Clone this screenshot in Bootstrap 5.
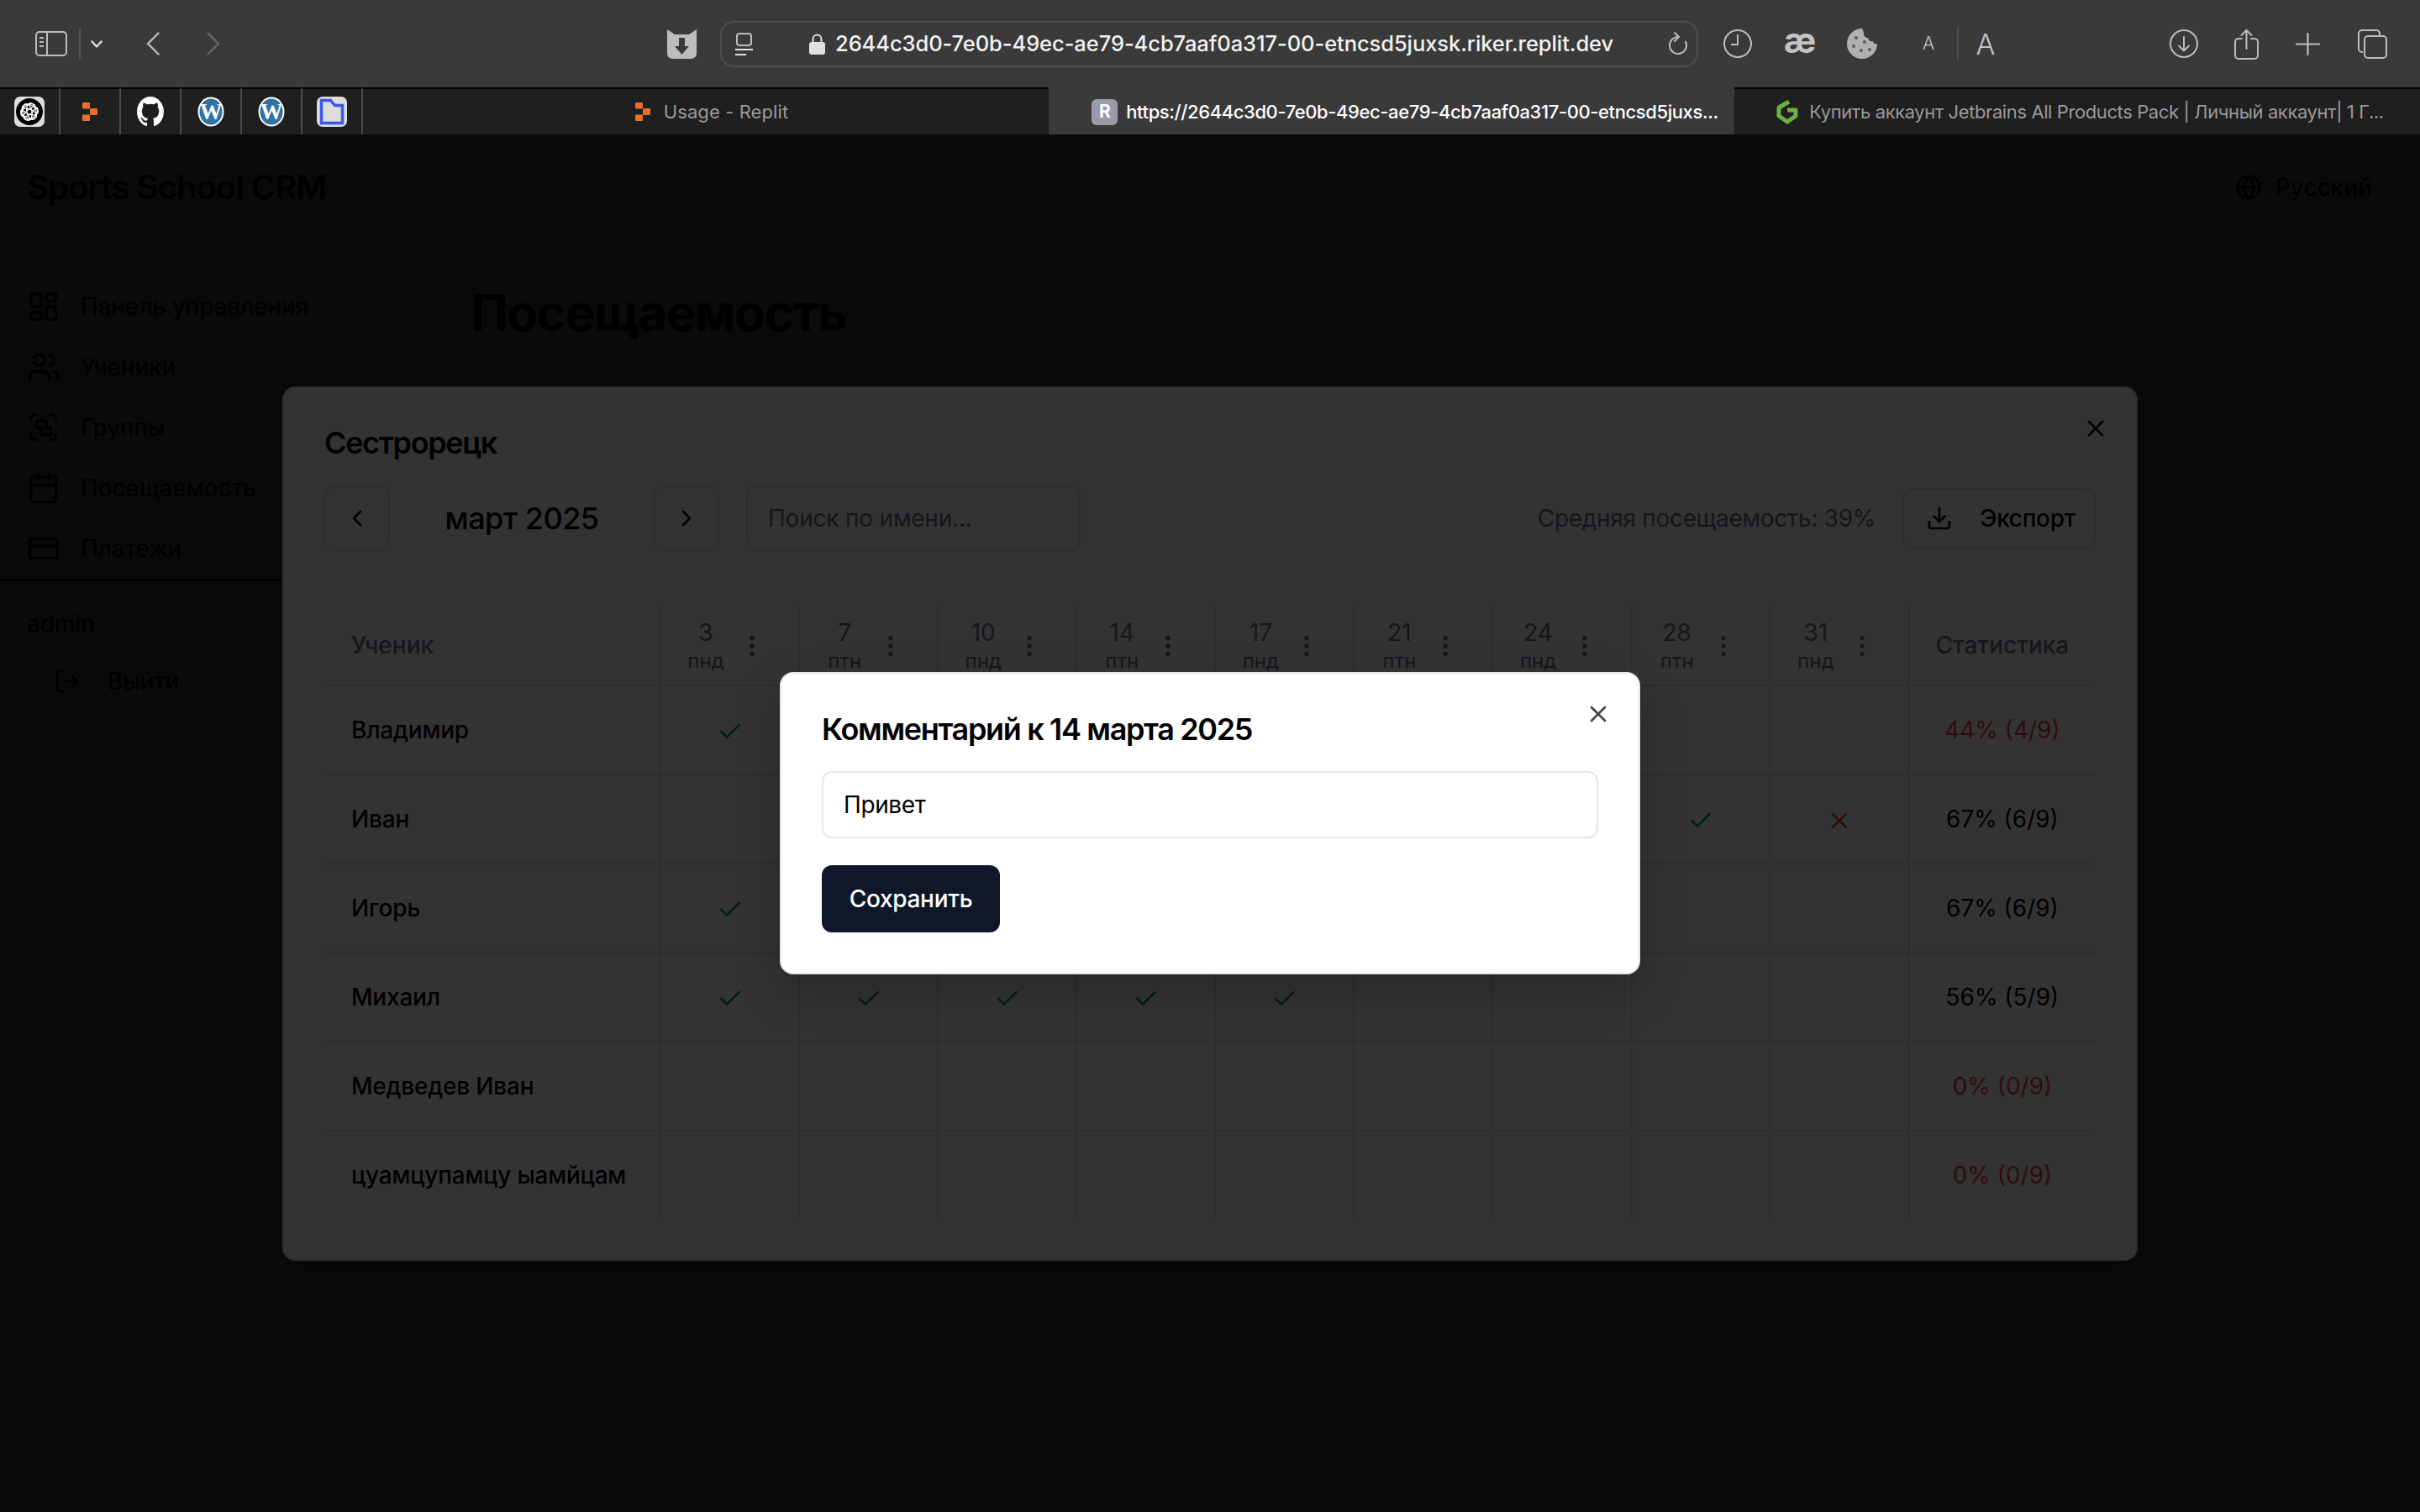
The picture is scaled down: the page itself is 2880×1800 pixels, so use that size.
<!DOCTYPE html>
<html lang="ru">
<head>
  <meta charset="utf-8">
  <title>Посещаемость</title>
  <link href="https://cdn.jsdelivr.net/npm/bootstrap@5.3.0/dist/css/bootstrap.min.css" rel="stylesheet">
  <style>
    body { width: 2880px; height: 1800px; overflow: hidden; background: #0a0a0a; font-family: Inter, "Noto Sans", sans-serif; color: #000; }
    svg.ln { fill: none; stroke: currentColor; stroke-width: 2; stroke-linecap: round; stroke-linejoin: round; flex: none; }

    /* browser chrome */
    .tool-bar { height: 104px; background: #3a3a3a; color: #bdbdbd; }
    .tool-bar svg { flex: none; }
    .tb-sep { width: 2px; height: 36px; background: #555; flex: none; }
    .m-side { margin-left: 42px; }
    .m-sep1 { margin-left: 14px; }
    .m-chev { margin-left: 12px; }
    .m-back { margin-left: 52px; }
    .m-fwd { margin-left: 56px; color: #666; }
    .m-shield { margin-left: 532px; }
    .url-box { margin-left: 28px; width: 1164px; height: 55px; border: 2px solid #4d4d4d; border-radius: 16px; padding-left: 15px; padding-right: 10px; }
    .url-text { color: #f2f2f2; font-size: 25.5px; font-weight: 500; letter-spacing: -.08px; margin-left: 12px; white-space: nowrap; }
    .m-lock { margin-left: 66px; }
    .m-clock { margin-left: 30px; }
    .ae-glyph { margin-left: 38px; width: 38px; font-size: 42px; font-weight: 700; line-height: 1; color: #c4c4c4; text-align: center; margin-top: -8px; }
    .m-cookie { margin-left: 36px; }
    .a-small { margin-left: 50px; width: 20px; font-size: 21px; font-weight: 300; color: #c4c4c4; text-align: center; }
    .m-sep2 { margin-left: 24px; height: 40px; background: #4d4d4d; }
    .a-large { margin-left: 18px; width: 28px; font-size: 34px; font-weight: 300; color: #c4c4c4; text-align: center; }
    .m-dl { margin-left: 205px; }
    .m-share { margin-left: 43px; }
    .m-plus { margin-left: 44px; }
    .m-tabs { margin-left: 45px; }

    .tab-strip { height: 56px; background: #1f1f1f; }
    .pin-cell { width: 72px; border-top: 2px solid #000; border-right: 2px solid #4a4a4a; }
    .tab-cell { flex: 0 0 816px; border-top: 2px solid #000; font-size: 22px; color: #9a9a9a; white-space: nowrap; gap: 16px; }
    .tab-usage { padding-left: 14px; letter-spacing: .1px; }
    .tab-shop { padding-left: 7px; letter-spacing: -.4px; gap: 13px; }
    .tab-cell.tab-on { background: #3a3a3a; border-top-color: #3a3a3a; color: #fff; font-weight: 500; gap: 10px; padding-left: 32px; letter-spacing: -.4px; }
    .tab-r { width: 31px; height: 31px; border-radius: 6px; background: #9a9aa8; color: #fff; font-size: 21px; font-weight: 700; }

    /* app under the dialogs */
    .app-root { height: 1640px; background: #fff; }
    .app-head { height: 128px; padding: 0 57px 0 32px; border-bottom: 2px solid #e5e7eb; }
    .app-brand { font-size: 40px; font-weight: 600; letter-spacing: -1px; }
    .lang-btn { font-size: 28px; font-weight: 500; gap: 16px; }
    .side-col { width: 512px; flex: none; font-size: 28px; }
    .side-nav { padding-top: 41px; border-bottom: 2px solid #000; }
    .side-item { height: 72px; padding-left: 32px; gap: 24px; }
    .side-user { padding: 34px 32px 0; height: 70px; line-height: 36px; }
    .side-out { height: 68px; margin-top: 16px; padding-left: 64px; gap: 32px; }
    .main-col { padding: 48px; }
    .page-title { font-size: 60px; font-weight: 700; line-height: 72px; letter-spacing: -1.4px; margin: 0; }

    .scrim { background: rgba(0, 0, 0, .8); }
    .dlg { border: 2px solid #e5e7eb; border-radius: 16px; padding: 48px; background: #fff; box-shadow: 0 20px 50px rgba(0, 0, 0, .22); }
    .dlg-wide { width: 2208px; padding-top: 47px; padding-bottom: 47px; }
    .dlg-small { width: 1024px; }
    .dlg-title { font-size: 36px; font-weight: 600; line-height: 36px; letter-spacing: -1.35px; margin: 0 0 32px; }
    .dlg-wide .dlg-title { margin-bottom: 33px; }
    .dlg-x { top: 32px; right: 32px; }
    .dlg-small .dlg-x { color: #444; }

    .tool-row { gap: 32px; }
    .nav-square { width: 78px; height: 78px; padding: 0; border: 2px solid #e5e7eb; border-radius: 12px; background: #fff; }
    .month-label { width: 250px; font-size: 36px; font-weight: 500; letter-spacing: -.5px; text-align: center; }
    .form-control.find-box { width: 398px; height: 78px; font-size: 28px; letter-spacing: -.2px; border: 2px solid #e5e7eb; border-radius: 12px; padding: 0 24px; }
    .form-control.find-box::placeholder { color: #64748b; }
    .avg-note { font-size: 28px; letter-spacing: -.3px; color: #64748b; margin-left: auto; }
    .btn.export-btn { width: 230px; height: 72px; padding: 0 26px; gap: 32px; font-size: 28px; font-weight: 500; letter-spacing: -.3px; border: 2px solid #e5e7eb; border-radius: 12px; color: #000; background: #fff; }

    .table.att-grid { table-layout: fixed; width: 2107px; margin: 65px 0 0; font-size: 28px; color: #000; --bs-table-border-color: #e5e7eb; }
    .att-grid th, .att-grid td { padding: 0; border-bottom: 2px solid #e5e7eb; vertical-align: middle; box-shadow: none; }
    .att-grid tbody tr:last-child td { border-bottom: 0; }
    .att-grid th { height: 95px; font-weight: 500; color: #64748b; }
    .att-grid td { height: 106px; }
    .att-grid .c-name { padding-left: 32px; }
    .att-grid td.c-name { font-weight: 500; letter-spacing: -.2px; }
    .att-grid .c-day { border-left: 2px solid #e5e7eb; text-align: center; }
    .att-grid .c-stat { border-left: 2px solid #e5e7eb; text-align: center; font-weight: 400; }
    .att-grid th.c-stat { font-weight: 500; }
    .day-head { padding-left: 24px; gap: 10px; margin-top: 2px; }
    .day-num { width: 58px; text-align: center; font-weight: 400; }
    .day-num b { display: block; font-weight: 400; font-size: 28px; line-height: 36px; }
    .day-num i { display: block; font-style: normal; font-size: 24px; line-height: 32px; }
    .mark-yes { color: #16a34a; }
    .mark-no { color: #ef4444; }
    .att-grid td.stat-low { color: #ef4444; }

    .form-control.note-box { height: 80px; font-size: 28px; letter-spacing: -.4px; border: 2px solid #e5e7eb; border-radius: 12px; padding: 0 24px; color: #000; }
    .btn.save-btn { width: 212px; height: 80px; margin-top: 32px; padding: 0; font-size: 28px; font-weight: 500; letter-spacing: -.3px; border: 0; border-radius: 12px; background: #0f172a; color: #fff; }
  </style>
</head>
<body class="m-0">
  <svg width="0" height="0" class="d-block position-absolute">
    <symbol id="i-dash" viewBox="0 0 24 24"><rect x="3" y="3" width="7" height="9" rx="1"/><rect x="14" y="3" width="7" height="5" rx="1"/><rect x="14" y="12" width="7" height="9" rx="1"/><rect x="3" y="16" width="7" height="5" rx="1"/></symbol>
    <symbol id="i-users" viewBox="0 0 24 24"><path d="M16 21v-2a4 4 0 0 0-4-4H6a4 4 0 0 0-4 4v2"/><circle cx="9" cy="7" r="4"/><path d="M22 21v-2a4 4 0 0 0-3-3.87"/><path d="M16 3.13a4 4 0 0 1 0 7.75"/></symbol>
    <symbol id="i-group" viewBox="0 0 24 24"><path d="M3 7V5c0-1.1.9-2 2-2h2"/><path d="M17 3h2c1.1 0 2 .9 2 2v2"/><path d="M21 17v2c0 1.1-.9 2-2 2h-2"/><path d="M7 21H5c-1.1 0-2-.9-2-2v-2"/><rect x="7" y="7" width="7" height="5" rx="1"/><rect x="10" y="12" width="7" height="5" rx="1"/></symbol>
    <symbol id="i-cal" viewBox="0 0 24 24"><path d="M8 2v4M16 2v4"/><rect x="3" y="4" width="18" height="18" rx="2"/><path d="M3 10h18"/></symbol>
    <symbol id="i-card" viewBox="0 0 24 24"><rect x="2" y="5" width="20" height="14" rx="2"/><path d="M2 10h20"/></symbol>
    <symbol id="i-out" viewBox="0 0 24 24"><path d="M9 21H5a2 2 0 0 1-2-2V5a2 2 0 0 1 2-2h4"/><path d="m16 17 5-5-5-5"/><path d="M21 12H9"/></symbol>
    <symbol id="i-globe" viewBox="0 0 24 24"><circle cx="12" cy="12" r="10"/><path d="M12 2a14.5 14.5 0 0 0 0 20 14.5 14.5 0 0 0 0-20"/><path d="M2 12h20"/></symbol>
    <symbol id="i-dl" viewBox="0 0 24 24"><path d="M21 15v4a2 2 0 0 1-2 2H5a2 2 0 0 1-2-2v-4"/><path d="m7 10 5 5 5-5"/><path d="M12 15V3"/></symbol>
    <symbol id="i-more" viewBox="0 0 24 24"><circle cx="12" cy="5" r="1"/><circle cx="12" cy="12" r="1"/><circle cx="12" cy="19" r="1"/></symbol>
    <symbol id="i-left" viewBox="0 0 24 24"><path d="m15 18-6-6 6-6"/></symbol>
    <symbol id="i-right" viewBox="0 0 24 24"><path d="m9 18 6-6-6-6"/></symbol>
    <symbol id="i-x" viewBox="0 0 24 24"><path d="M18 6 6 18M6 6l12 12"/></symbol>
    <symbol id="i-check" viewBox="0 0 24 24"><path d="M20 6 9 17l-5-5"/></symbol>
  </svg>

  <div class="tool-bar d-flex align-items-center">
    <svg class="m-side" width="38" height="30" viewBox="0 0 38 30" fill="none" stroke="currentColor" stroke-width="2"><rect x="1" y="1" width="36" height="28" rx="4"/><path d="M14 1v28M5 8h5M5 13h5M5 18h5"/></svg>
    <span class="tb-sep m-sep1"></span>
    <svg class="m-chev" width="14" height="9" viewBox="0 0 14 9" fill="none" stroke="#e0e0e0" stroke-width="2.4" stroke-linecap="round" stroke-linejoin="round"><path d="m1.5 1.5 5.5 6 5.5-6"/></svg>
    <svg class="m-back" width="16" height="28" viewBox="0 0 16 28" fill="none" stroke="currentColor" stroke-width="2.4" stroke-linecap="round" stroke-linejoin="round"><path d="M14.5 1.5 2 14l12.5 12.5"/></svg>
    <svg class="m-fwd" width="16" height="28" viewBox="0 0 16 28" fill="none" stroke="currentColor" stroke-width="2.4" stroke-linecap="round" stroke-linejoin="round"><path d="M1.5 1.5 14 14 1.5 26.5"/></svg>
    <svg class="m-shield" width="35" height="35" viewBox="0 0 35 35"><path fill="#bdbdbd" d="M0 0l9 6h17l9-6v28q0 7-7 7H7q-7 0-7-7z"/><path fill="#3a3a3a" d="M14 10h7v10h5l-8.500 10L9 20h5z"/></svg>
    <div class="url-box d-flex align-items-center">
      <svg width="23" height="27" viewBox="0 0 23 27" fill="none" stroke="currentColor" stroke-width="2"><rect x="3" y="1" width="17" height="14" rx="3"/><path d="M1 20h21" stroke="#e0e0e0"/><path d="M1 26h13" stroke="#e0e0e0"/></svg>
      <svg class="m-lock" width="19" height="25" viewBox="0 0 19 25"><path d="M4.500 11V6.500a5 5 0 0 1 10 0V11" fill="none" stroke="#e0e0e0" stroke-width="2"/><rect y="10" width="19" height="15" rx="3" fill="#e0e0e0"/></svg>
      <span class="url-text">2644c3d0-7e0b-49ec-ae79-4cb7aaf0a317-00-etncsd5juxsk.riker.replit.dev</span>
      <svg class="ms-auto" width="24" height="28" viewBox="0 0 24 28" fill="none" stroke="currentColor" stroke-width="2" stroke-linecap="round" stroke-linejoin="round"><path d="M21 11.600A10 10 0 1 1 12 6"/><path d="m8 1 5 5-5 5"/></svg>
    </div>
    <svg class="m-clock" width="34" height="34" viewBox="0 0 34 34" fill="none" stroke="currentColor" stroke-width="2"><circle cx="17" cy="17" r="16"/><path d="M17 6v12H9"/></svg>
    <span class="ae-glyph">æ</span>
    <svg class="m-cookie" width="38" height="38" viewBox="0 0 38 38"><path fill="#b0b0b0" d="M19 1a18 18 0 1 0 18 18c-3 1-5-1-5-3-3 1-6-1-6-4-3 0-5-2-5-5 0-2-1-4-2-6z"/><g fill="#5c5c5c"><circle cx="12" cy="12" r="2"/><circle cx="22" cy="17" r="2"/><circle cx="9" cy="22" r="2"/><circle cx="18" cy="27" r="2"/><circle cx="28" cy="26" r="2"/></g></svg>
    <span class="a-small">A</span>
    <span class="tb-sep m-sep2"></span>
    <span class="a-large">A</span>
    <svg class="m-dl" width="34" height="34" viewBox="0 0 34 34" fill="none" stroke="currentColor" stroke-width="2" stroke-linecap="round" stroke-linejoin="round"><circle cx="17" cy="17" r="16"/><path d="M17 9v16M11 19.500l6 6 6-6"/></svg>
    <svg class="m-share" width="29" height="37" viewBox="0 0 29 37" fill="none" stroke="currentColor" stroke-width="2" stroke-linecap="round" stroke-linejoin="round"><path d="M9 12H5a4 4 0 0 0-4 4v16a4 4 0 0 0 4 4h19a4 4 0 0 0 4-4V16a4 4 0 0 0-4-4h-4"/><path d="M14.500 24V2M8.500 8l6-6 6 6"/></svg>
    <svg class="m-plus" width="29" height="27" viewBox="0 0 29 27" fill="none" stroke="currentColor" stroke-width="2.200" stroke-linecap="round"><path d="M14.500 1v25M1 13.500h27"/></svg>
    <svg class="m-tabs" width="35" height="35" viewBox="0 0 35 35" fill="none" stroke="currentColor" stroke-width="2"><path d="M6 27H5a4 4 0 0 1-4-4V5a4 4 0 0 1 4-4h17a4 4 0 0 1 4 4v2"/><rect x="8" y="8" width="26" height="26" rx="4"/></svg>
  </div>

  <div class="tab-strip d-flex">
    <div class="pin-cell d-flex align-items-center justify-content-center">
      <svg width="36" height="36" viewBox="0 0 36 36"><rect width="36" height="36" rx="7" fill="#ddd"/><circle cx="18" cy="18" r="16" fill="#000"/><g fill="none" stroke="#fff" stroke-width="1.300"><ellipse cx="18" cy="15.500" rx="10" ry="5.500" transform="rotate(20 18 18)"/><ellipse cx="18" cy="15.500" rx="10" ry="5.500" transform="rotate(80 18 18)"/><ellipse cx="18" cy="15.500" rx="10" ry="5.500" transform="rotate(140 18 18)"/><ellipse cx="18" cy="15.500" rx="10" ry="5.500" transform="rotate(200 18 18)"/><ellipse cx="18" cy="15.500" rx="10" ry="5.500" transform="rotate(260 18 18)"/><ellipse cx="18" cy="15.500" rx="10" ry="5.500" transform="rotate(320 18 18)"/></g></svg>
    </div>
    <div class="pin-cell d-flex align-items-center justify-content-center">
      <svg width="18" height="22" viewBox="0 0 18 22" fill="#e8702a"><rect width="9" height="7.500" rx="1"/><rect x="9" y="7" width="9" height="8" rx="1"/><rect y="14.500" width="9" height="7.500" rx="1"/></svg>
    </div>
    <div class="pin-cell d-flex align-items-center justify-content-center">
      <svg width="32" height="36" viewBox="0 0 16 16" preserveAspectRatio="none"><path fill="#fff" d="M8 0C3.580 0 0 3.580 0 8c0 3.540 2.290 6.530 5.470 7.590.4.070.55-.17.55-.38 0-.19-.01-.82-.01-1.490-2.010.37-2.530-.49-2.690-.94-.09-.23-.48-.94-.82-1.130-.28-.15-.68-.52-.01-.53.63-.01 1.080.58 1.230.82.72 1.210 1.870.87 2.330.66.07-.52.28-.87.51-1.070-1.780-.2-3.640-.89-3.640-3.950 0-.87.31-1.590.82-2.150-.08-.2-.36-1.020.08-2.120 0 0 .67-.21 2.200.82.64-.18 1.320-.27 2-.27.68 0 1.360.09 2 .27 1.530-1.040 2.200-.82 2.200-.82.44 1.100.16 1.920.08 2.120.51.56.82 1.270.82 2.150 0 3.070-1.870 3.750-3.650 3.950.29.25.54.73.54 1.480 0 1.070-.01 1.930-.01 2.200 0 .21.15.46.55.38A8.013 8.013 0 0 0 16 8c0-4.420-3.580-8-8-8z"/></svg>
    </div>
    <div class="pin-cell d-flex align-items-center justify-content-center">
      <svg width="32" height="36" viewBox="0 0 32 36"><ellipse cx="16" cy="18" rx="15.500" ry="17.500" fill="#fff"/><ellipse cx="16" cy="18" rx="13.500" ry="15.500" fill="#2f73a3"/><text x="16" y="27" text-anchor="middle" font-family="Liberation Serif, serif" font-size="27" font-weight="700" fill="#fff">W</text></svg>
    </div>
    <div class="pin-cell d-flex align-items-center justify-content-center">
      <svg width="32" height="36" viewBox="0 0 32 36"><ellipse cx="16" cy="18" rx="15.500" ry="17.500" fill="#fff"/><ellipse cx="16" cy="18" rx="13.500" ry="15.500" fill="#2f73a3"/><text x="16" y="27" text-anchor="middle" font-family="Liberation Serif, serif" font-size="27" font-weight="700" fill="#fff">W</text></svg>
    </div>
    <div class="pin-cell d-flex align-items-center justify-content-center">
      <svg width="36" height="36" viewBox="0 0 36 36"><rect width="36" height="36" rx="7" fill="#ddd"/><path d="M5.500 4.500h11l5 6h9v21h-25z" fill="none" stroke="#3d55f0" stroke-width="3.500"/></svg>
    </div>
    <div class="tab-cell tab-usage d-flex align-items-center justify-content-center">
      <svg width="18" height="22" viewBox="0 0 18 22" fill="#e8702a"><rect width="9" height="7.500" rx="1"/><rect x="9" y="7" width="9" height="8" rx="1"/><rect y="14.500" width="9" height="7.500" rx="1"/></svg>
      <span>Usage - Replit</span>
    </div>
    <div class="tab-cell tab-on d-flex align-items-center justify-content-center">
      <span class="tab-r d-flex align-items-center justify-content-center">R</span>
      <span>https://2644c3d0-7e0b-49ec-ae79-4cb7aaf0a317-00-etncsd5juxs...</span>
    </div>
    <div class="tab-cell tab-shop d-flex align-items-center justify-content-center">
      <svg width="26" height="30" viewBox="0 0 26 30" fill="none" stroke="#6ab43e" stroke-width="5" stroke-linejoin="round"><path d="M15 3 3 10v10l10 7 10-7v-7H13"/></svg>
      <span>Купить аккаунт Jetbrains All Products Pack | Личный аккаунт| 1 Г...</span>
    </div>
  </div>

  <div class="app-root position-relative">
    <header class="app-head d-flex align-items-center justify-content-between">
      <div class="app-brand">Sports School CRM</div>
      <div class="lang-btn d-flex align-items-center">
        <svg class="ln" width="32" height="32"><use href="#i-globe"/></svg>
        <span>Русский</span>
      </div>
    </header>
    <div class="d-flex">
      <aside class="side-col">
        <nav class="side-nav">
          <div class="side-item d-flex align-items-center"><svg class="ln" width="40" height="40"><use href="#i-dash"/></svg>Панель управления</div>
          <div class="side-item d-flex align-items-center"><svg class="ln" width="40" height="40"><use href="#i-users"/></svg>Ученики</div>
          <div class="side-item d-flex align-items-center"><svg class="ln" width="40" height="40"><use href="#i-group"/></svg>Группы</div>
          <div class="side-item d-flex align-items-center"><svg class="ln" width="40" height="40"><use href="#i-cal"/></svg>Посещаемость</div>
          <div class="side-item d-flex align-items-center"><svg class="ln" width="40" height="40"><use href="#i-card"/></svg>Платежи</div>
        </nav>
        <div class="side-user">admin</div>
        <div class="side-out d-flex align-items-center"><svg class="ln" width="32" height="32"><use href="#i-out"/></svg>Выйти</div>
      </aside>
      <main class="main-col flex-grow-1">
        <h1 class="page-title">Посещаемость</h1>
      </main>
    </div>

    <div class="scrim position-absolute top-0 start-0 w-100 h-100 d-flex align-items-center justify-content-center">
      <div class="dlg dlg-wide position-relative">
        <svg class="ln dlg-x position-absolute" width="32" height="32"><use href="#i-x"/></svg>
        <h2 class="dlg-title">Сестрорецк</h2>
        <div class="tool-row d-flex align-items-center">
          <button class="nav-square d-flex align-items-center justify-content-center"><svg class="ln" width="32" height="32"><use href="#i-left"/></svg></button>
          <div class="month-label">март 2025</div>
          <button class="nav-square d-flex align-items-center justify-content-center"><svg class="ln" width="32" height="32"><use href="#i-right"/></svg></button>
          <input class="form-control find-box" placeholder="Поиск по имени...">
          <span class="avg-note">Средняя посещаемость: 39%</span>
          <button class="btn export-btn d-flex align-items-center"><svg class="ln" width="32" height="32"><use href="#i-dl"/></svg>Экспорт</button>
        </div>
        <table class="table att-grid" id="attGrid">
          <colgroup id="attCols"></colgroup>
          <thead><tr></tr></thead>
          <tbody></tbody>
        </table>
      </div>
    </div>

    <div class="scrim position-absolute top-0 start-0 w-100 h-100 d-flex align-items-center justify-content-center">
      <div class="dlg dlg-small position-relative">
        <svg class="ln dlg-x position-absolute" width="32" height="32"><use href="#i-x"/></svg>
        <h2 class="dlg-title">Комментарий к 14 марта 2025</h2>
        <input class="form-control note-box" value="Привет">
        <button class="btn save-btn d-block">Сохранить</button>
      </div>
    </div>
  </div>

  <script>
    const days = [[3, 'пнд'], [7, 'птн'], [10, 'пнд'], [14, 'птн'], [17, 'пнд'], [21, 'птн'], [24, 'пнд'], [28, 'птн'], [31, 'пнд']];
    // y = was there, n = missed, - = no mark
    const pupils = [
      ['Владимир', 'yyyy-----', '44% (4/9)', true],
      ['Иван', '-yyyyy-yn', '67% (6/9)', false],
      ['Игорь', 'yyyyyy---', '67% (6/9)', false],
      ['Михаил', 'yyyyy----', '56% (5/9)', false],
      ['Медведев Иван', '---------', '0% (0/9)', true],
      ['цуамцупамцу ыамйцам', '---------', '0% (0/9)', true]
    ];

    const icon = (name, cls) => `<svg class="ln ${cls}" width="32" height="32"><use href="#${name}"/></svg>`;

    document.querySelector('#attCols').innerHTML =
      '<col style="width:400px">' + days.map(() => '<col style="width:165.1px">').join('') + '<col style="width:221px">';

    document.querySelector('#attGrid thead tr').innerHTML =
      '<th class="c-name">Ученик</th>' +
      days.map(([num, name]) => `
        <th class="c-day"><div class="day-head d-flex align-items-center">
          <div class="day-num"><b>${num}</b><i>${name}</i></div>${icon('i-more', '')}
        </div></th>`).join('') +
      '<th class="c-stat">Статистика</th>';

    document.querySelector('#attGrid tbody').innerHTML = pupils.map(([name, marks, stat, low]) => `
      <tr>
        <td class="c-name">${name}</td>
        ${[...marks].map(m => `<td class="c-day">${m === 'y' ? icon('i-check', 'mark-yes') : m === 'n' ? icon('i-x', 'mark-no') : ''}</td>`).join('')}
        <td class="c-stat ${low ? 'stat-low' : ''}">${stat}</td>
      </tr>`).join('');
  </script>
  <script src="https://cdn.jsdelivr.net/npm/bootstrap@5.3.0/dist/js/bootstrap.bundle.min.js"></script>
</body>
</html>
